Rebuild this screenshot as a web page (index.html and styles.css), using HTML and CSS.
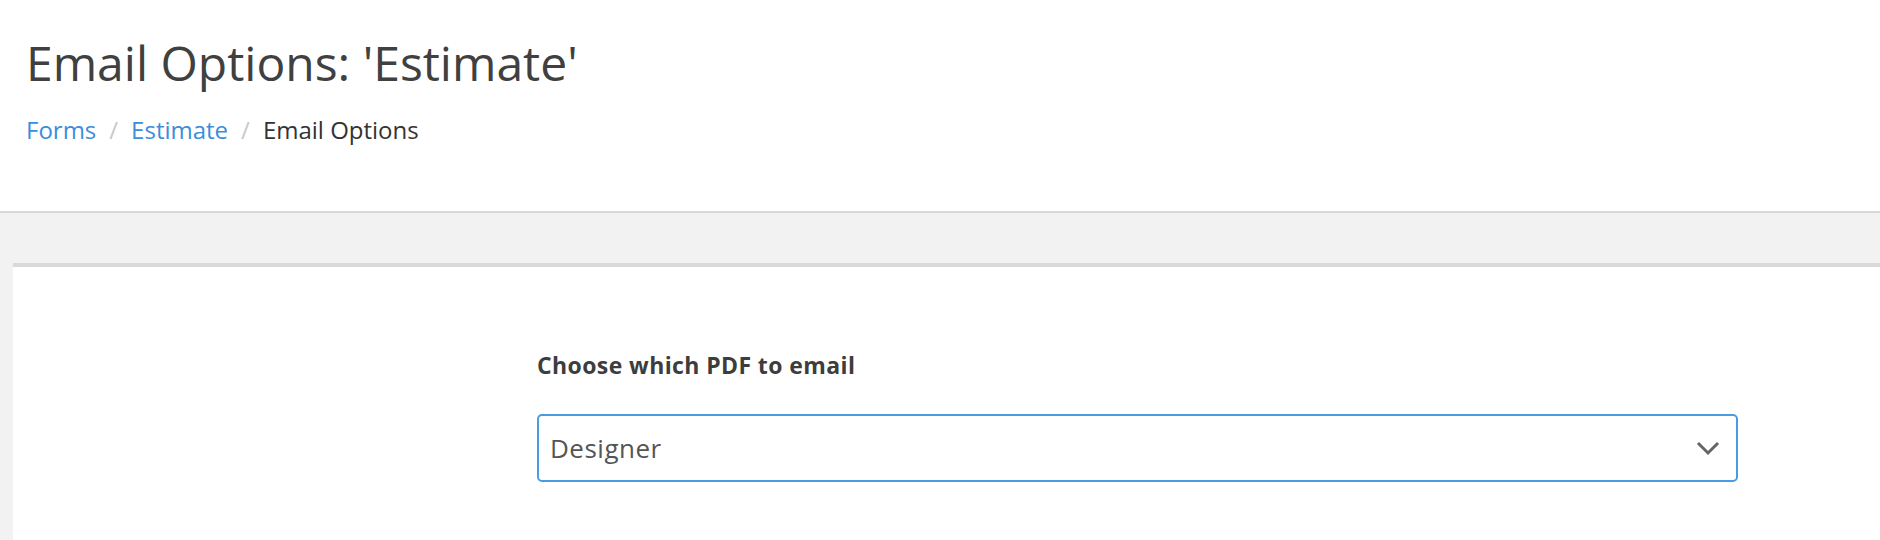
FILE: index.html
```
<!DOCTYPE html>
<html lang="en">
<head>
    <meta charset="UTF-8">
    <meta name="viewport" content="width=device-width, initial-scale=1.0">
    <title>Email Options</title>
    <link rel="stylesheet" href="styles.css">
</head>
<body>
    <div class="page-header">
        <h1>Email Options: 'Estimate'</h1>
        <ul class="crumbs">
            <li><a href="#">Forms</a></li>
            <li class="sep">/</li>
            <li><a href="#">Estimate</a></li>
            <li class="sep">/</li>
            <li>Email Options</li>
        </ul>
    </div>
    <div class="main">
        <div class="card">
            <div class="field">
                <label for="pdf">Choose which PDF to email</label>
                <div class="select">
                    <span>Designer</span>
                    <svg width="24" height="16" viewBox="0 0 24 16">
                        <polyline points="2,3 12,13 22,3" fill="none" stroke="#666" stroke-width="3"/>
                    </svg>
                </div>
            </div>
        </div>
    </div>
</body>
</html>
```

FILE: styles.css
```
body {
    margin: 0;
    font-family: "Open Sans", Lato, sans-serif;
    color: #3d3d3d;
    background: #f2f2f2;
}
.page-header {
    background: #fff;
    height: 213px;
    border-bottom: 2px solid #d6d8db;
    padding-left: 26px;
    box-sizing: border-box;
}
.page-header h1 {
    margin: 0;
    padding-top: 34px;
    font-size: 48px;
    font-weight: 400;
    line-height: 58px;
    color: #404040;
}
.crumbs {
    list-style: none;
    margin: 23px 0 0;
    padding: 0;
    display: flex;
    gap: 13px;
    font-size: 24px;
    line-height: 30px;
    color: #333;
}
.crumbs a {
    color: #3a8edb;
    text-decoration: none;
}
.crumbs .sep {
    color: #c8c8c8;
}
.main {
    padding: 50px 0 0 13px;
}
.card {
    background: #fff;
    border-top: 4px solid #d9d9d9;
    height: 300px;
    padding-left: 524px;
}
.field {
    width: 1201px;
    padding-top: 83px;
}
.field label {
    display: block;
    font-weight: 700;
    font-size: 23px;
    letter-spacing: 0.4px;
    line-height: 30px;
    color: #3d3d3d;
}
.select {
    margin-top: 34px;
    height: 68px;
    box-sizing: border-box;
    border: 2px solid #4a9ce0;
    border-radius: 5px;
    display: flex;
    align-items: center;
    justify-content: space-between;
    padding: 0 16px 0 11px;
    font-size: 26px;
    letter-spacing: 0.5px;
    color: #555;
}
```
